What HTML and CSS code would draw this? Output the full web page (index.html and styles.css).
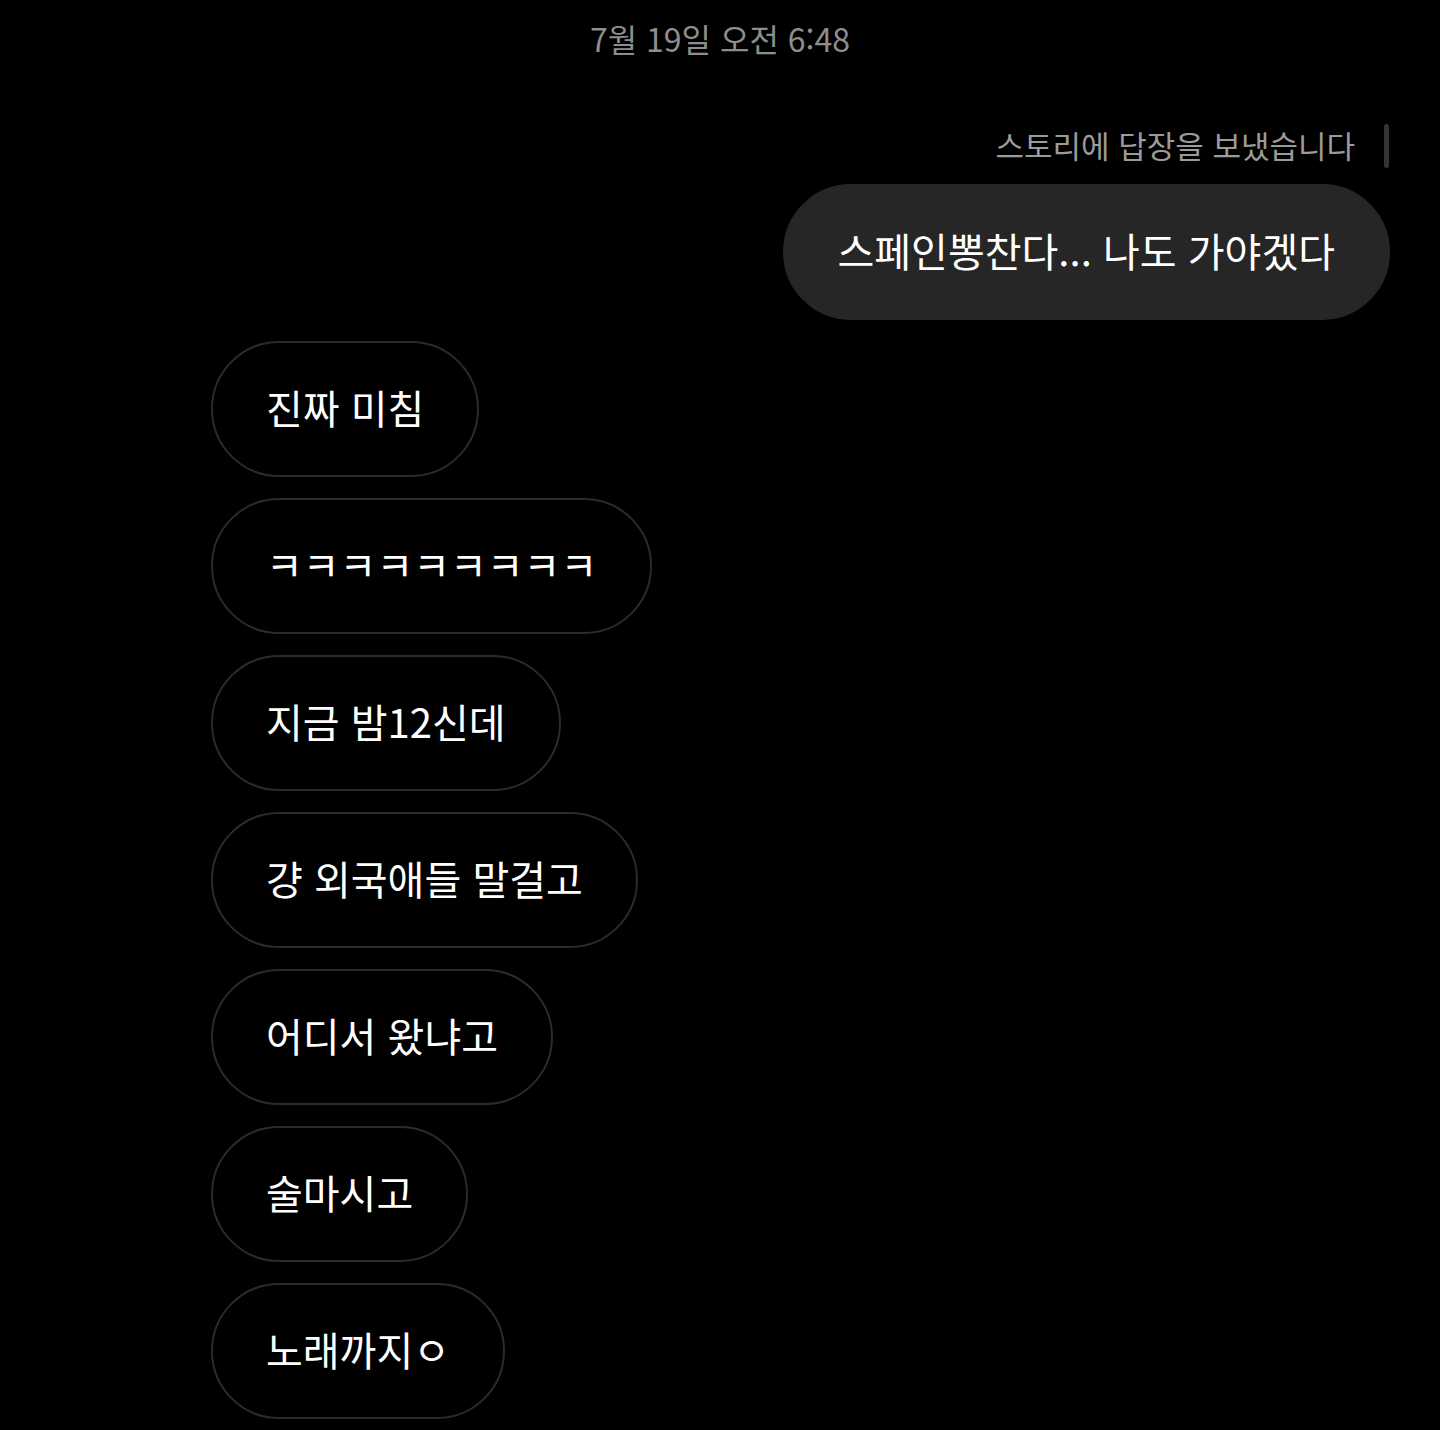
FILE: index.html
```html
<!DOCTYPE html>
<html lang="ko">
<head>
  <meta charset="UTF-8">
  <meta name="viewport" content="width=device-width, initial-scale=1.0">
  <title>메시지</title>
  <link rel="stylesheet" href="styles.css">
</head>
<body>
  <div class="chat">
    <div class="fecha">7월 19일 오전 6:48</div>

    <div class="respuesta">
      <span>스토리에 답장을 보냈습니다</span>
      <div class="barra"></div>
    </div>
    <div class="fila mia">
      <div class="burbuja">스페인뽕찬다... 나도 가야겠다</div>
    </div>

    <div class="fila">
      <div class="burbuja otra">진짜 미침</div>
    </div>
    <div class="fila">
      <div class="burbuja otra">ㅋㅋㅋㅋㅋㅋㅋㅋㅋ</div>
    </div>
    <div class="fila">
      <div class="burbuja otra">지금 밤12신데</div>
    </div>
    <div class="fila">
      <div class="burbuja otra">걍 외국애들 말걸고</div>
    </div>
    <div class="fila">
      <div class="burbuja otra">어디서 왔냐고</div>
    </div>
    <div class="fila">
      <div class="burbuja otra">술마시고</div>
    </div>
    <div class="fila">
      <div class="burbuja otra">노래까지ㅇ</div>
    </div>
  </div>
</body>
</html>
```

FILE: styles.css
```css
body{
  margin: 0;
  background-color: #000;
  font-family: "Noto Sans CJK KR", "Noto Sans", sans-serif;
  color: #fff;
}
.chat{
  display: flex;
  flex-direction: column;
  height: 1430px;
  overflow: hidden;
}
.fecha{
  height: 76px;
  line-height: 76px;
  text-align: center;
  font-size: 32px;
  color: #8e8e8e;
}
.respuesta{
  margin-top: 48px;
  height: 44px;
  display: flex;
  justify-content: flex-end;
  align-items: center;
  gap: 29px;
  padding-right: 51px;
  font-size: 31px;
  color: #9b9b9b;
}
.respuesta span{
  padding-bottom: 3px;
}
.barra{
  width: 5px;
  height: 44px;
  border-radius: 3px;
  background-color: #333;
}
.fila{
  display: flex;
  padding-left: 211px;
  margin-top: 21px;
}
.fila.mia{
  justify-content: flex-end;
  padding-left: 0;
  padding-right: 50px;
  margin-top: 16px;
}
.burbuja{
  box-sizing: border-box;
  height: 136px;
  display: flex;
  align-items: center;
  padding: 0 53px 4px;
  border: 2px solid #262626;
  border-radius: 68px;
  background-color: #262626;
  font-size: 40px;
  line-height: 1;
  white-space: nowrap;
}
.burbuja.otra{
  background-color: #000;
  border-color: #2b2b2b;
}
```
